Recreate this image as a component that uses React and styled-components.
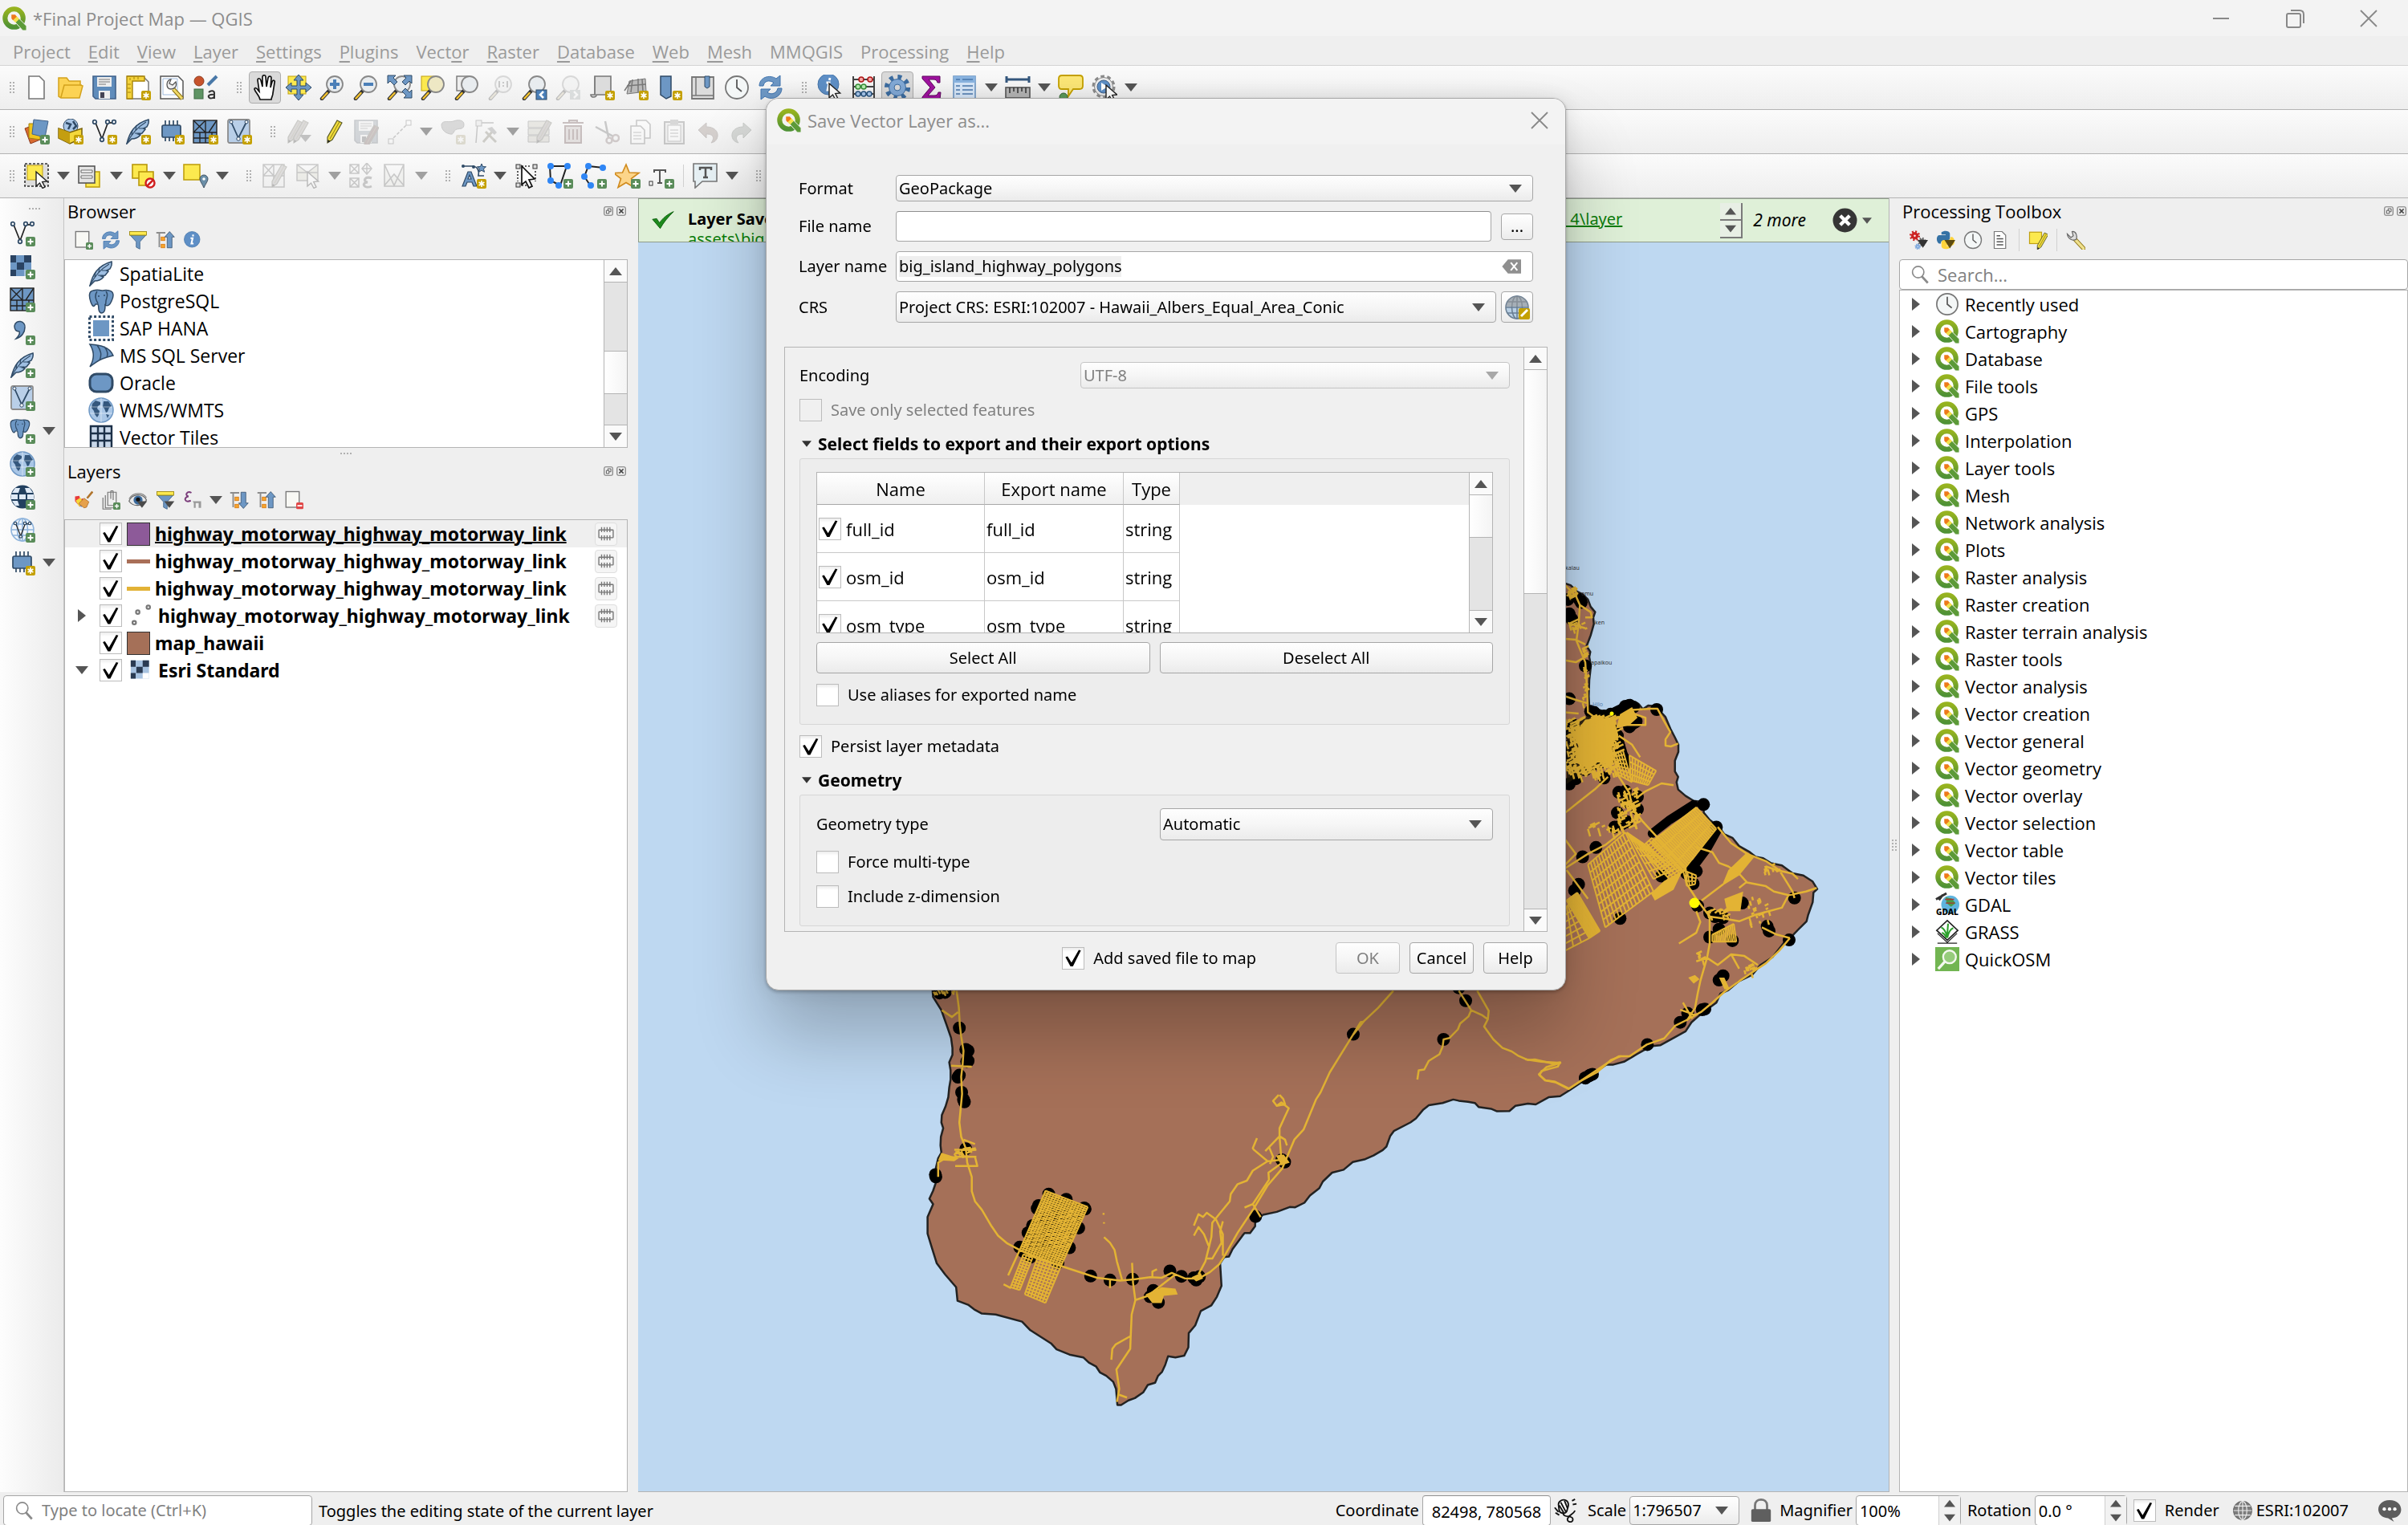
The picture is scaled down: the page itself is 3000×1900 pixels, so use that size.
import React from "react";
import styled, { createGlobalStyle, css } from "styled-components";

const ui = `"Open Sans", "Noto Sans", sans-serif`;
const form = `"Noto Sans", "Open Sans", sans-serif`;
const edge = "#b4b4b4";

const Global = createGlobalStyle`
  * { box-sizing: border-box; }
  body { margin: 0; background: #efefef; color: #000; font: 22px/28px ${ui}; }
  button, input, select { font: inherit; color: inherit; margin: 0; }
  button { padding: 0; border: 0; background: none; }
  ul { margin: 0; padding: 0; list-style: none; }
  svg { display: block; }
`;

/* ---------- icon artwork, drawn on a 32 unit grid ---------- */

const B = "#6d97c4";
const D = "#2f4a66";
const G = "#8c8c8c";

const Plus = () => (
  <g><rect x="20" y="20" width="12" height="12" rx="2" fill="#5a8c5a" /><path d="M26 22.5v7M22.5 26h7" stroke="#fff" strokeWidth="2" /></g>
);
const Star = () => (
  <g><rect x="20" y="20" width="12" height="12" rx="2" fill="#c4a000" /><path d="M26 22v8M22.6 24l6.800 4M29.400 24l-6.800 4" stroke="#fff" strokeWidth="1.600" /></g>
);
const Lens = ({ tint = "#e8ecef" }) => (
  <g>
    <path d="M12 20L3 30" stroke="#333" strokeWidth="4.500" strokeLinecap="round" />
    <path d="M9.500 23L3.500 29.500" stroke="#f3c330" strokeWidth="2.500" strokeLinecap="round" />
    <circle cx="19" cy="12" r="10" fill={tint} stroke="#888" strokeWidth="1.800" />
  </g>
);
const Pencil = ({ fill = "#f0dc3c" }) => (
  <g><path d="M22 2l6 3-12 21-6 4 0-7z" fill={fill} stroke="#5b5b2a" strokeWidth="1.200" /><path d="M25 3.500L13 25" stroke="#8c7c10" strokeWidth="1" /><path d="M10 30l.5-4 3 1.800z" fill="#222" /></g>
);
const Cursor = () => <path d="M15 11v18l4.500-4 3.500 6.500 3-1.500-3.300-6.500 6-.5z" fill="#fff" stroke="#222" strokeWidth="1.400" />;
const Meridians = ({ c = D, fill = B }) => (
  <g fill="none" stroke={c} strokeWidth="1.600"><circle cx="16" cy="16" r="14" fill={fill} /><ellipse cx="16" cy="16" rx="6.500" ry="14" /><path d="M16 2v28M2 16h28M4 9h24M4 23h24" /></g>
);
const Land = () => (
  <g><circle cx="16" cy="16" r="15" fill="#a9c6e6" stroke={B} strokeWidth="1.500" />
    <path d="M5 8l4-4 6 2 0 3-3 2-1 3 3 3-1 5-2 3-3-4-1-4-3-4zM19 5l6 0 4 6-3 2-2 5-2 1-2-5-2-2zM22 21l4 1-2 4z" fill="#34577d" />
    <path d="M2 12h28M2 20h28M16 1v30" stroke="#fff" strokeWidth=".7" opacity=".7" /></g>
);
const Gear = ({ cx = 16, cy = 16, r = 9, fill = "#82a9d6", stroke = "#3c6ca0", hole = "#dcdcdc" }) => (
  <g>
    <circle cx={cx} cy={cy} r={r * 1.15} fill="none" stroke={stroke} strokeWidth={r * 0.62} strokeDasharray={`${r * 0.42} ${r * 0.483}`} />
    <circle cx={cx} cy={cy} r={r * 0.95} fill={fill} stroke={stroke} strokeWidth="1" />
    <circle cx={cx} cy={cy} r={r * 0.36} fill={hole} stroke={stroke} strokeWidth="1" />
  </g>
);
const Feather = () => (
  <g><path d="M2 31C5 18 11 6 29 1c1 5-1 7-2 9l-4 2 2 1-4 5-5 1 3 1c-4 5-8 5-11 5z" fill="#9fbfe2" stroke={D} strokeWidth="1.500" /><path d="M2 31C8 18 16 10 26 4M8 20l1-6M13 14l1-6M12 18h6M17 12h7" stroke={D} strokeWidth="1.200" fill="none" /></g>
);
const Elephant = () => (
  <g fill={B} stroke={D} strokeWidth="1.500"><path d="M6 3c-6 1-5 8-3 14 2 6 4 7 6 3l3 0c2 4-1 9 4 11 5 0 5-5 5-10 3 2 6 0 8-5 3-6 3-12-3-13-5-1-6 0-9 0-4-1-8-1-11 0z" /><path d="M11 4c-3 4-2 10 1 15M22 4c4 5 0 9 0 12 0 2 0 4-1 5" fill="none" /><path d="M13 10h0M20 9h0" strokeWidth="2" strokeLinecap="round" /></g>
);
const Chip = ({ fill = B, stroke = D }) => (
  <g stroke={stroke} strokeWidth="1.700"><path d="M8 2v6M13 2v6M18 2v6M23 2v6M8 22v6M13 22v6M18 22v6" /><rect x="4" y="8" width="23" height="15" rx="2" fill={fill} /></g>
);
const Vee = () => (
  <g fill="none" stroke={D} strokeWidth="1.700"><path d="M5 5l8 20 7-19" stroke="#222" /><path d="M20 5h7" stroke="#222" /><circle cx="4" cy="4" r="2.300" fill="#fff" /><circle cx="20" cy="4" r="2.300" fill="#fff" /><circle cx="28" cy="4" r="2.300" fill="#fff" /><circle cx="13" cy="26" r="2.300" fill="#fff" /></g>
);
const MeshArt = () => (
  <g stroke="#222" strokeWidth="1.400" fill={B}><rect x="1" y="2" width="29" height="28" /><path d="M1 17h29M1 2l15 15M16 2L1 17M16 2v28M30 2L20 17M1 24h29M9 17v13M24 17v13" fill="none" /></g>
);
const Checker = ({ a = "#2a4362", b = B, c = "#a7c2e0" }) => (
  <g><rect width="26" height="26" x="1" y="2" fill={b} /><path d="M1 2h7v9H1zM18 2h9v9h-9zM9 11h9v9H9zM1 20h7v8H1z" fill={a} /><path d="M18 20h9v8h-9z" fill={c} /></g>
);
const VeeTile = () => (
  <g><rect x="2" y="1" width="27" height="29" rx="2" fill="#b9cfe8" stroke={G} strokeWidth="1.800" /><path d="M6 4l9 20 10-20" fill="none" stroke={D} strokeWidth="1.800" /><circle cx="6" cy="4" r="2" fill="#fff" stroke={D} /><circle cx="25" cy="4" r="2" fill="#fff" stroke={D} /><circle cx="15" cy="25" r="2.200" fill="#fff" stroke={D} /></g>
);
const Page = () => <path d="M6 2h13l6 6v22H6z" fill="#fff" stroke="#777" strokeWidth="1.600" />;
const Clock = ({ r = 14 }) => (
  <g><circle cx="16" cy="16" r={r} fill="#f4f7f7" stroke="#777" strokeWidth="1.800" /><path d="M16 6v10l6 5" fill="none" stroke="#555" strokeWidth="1.800" /></g>
);
const Funnel = () => (
  <g><path d="M3 8h26l-10 11v12l-6-3V19z" fill={B} stroke="#44688f" strokeWidth="1.200" /><rect x="2" y="2" width="28" height="6" fill="#fce94f" stroke="#a08c10" strokeWidth="1.200" /></g>
);
const Down = () => <path d="M14 18h17l-8.500 11z" fill="#4a4a4a" />;
const TreeArt = () => (
  <g><path d="M1 4h15M6 4v24" stroke={G} strokeWidth="2.500" fill="none" /><rect x="9" y="11" width="6" height="6" fill="#f6a52c" stroke="#d2700a" /><rect x="9" y="23" width="6" height="6" fill="#f6a52c" stroke="#d2700a" /></g>
);
const Refresh = () => (
  <g fill={B} stroke="#3e72ad" strokeWidth="1"><path d="M2 14C2 4 14-1 23 5l5-4v13H16l4-4C14 6 8 8 7 14z" /><path d="M30 17c0 10-12 16-21 10l-5 4V18h12l-4 4c5 4 12 1 13-5z" /></g>
);
const Info = () => (
  <g><circle cx="15" cy="15" r="13" fill="#5e8fc6" stroke="#4675a8" /><path d="M17 7l-.6 3M12.500 13h3.500l-2 9h3.500" stroke="#fff" strokeWidth="2.800" fill="none" /></g>
);
const Disk = () => (
  <g><path d="M2 2h28v28H5l-3-3z" fill="#5f8cbb" stroke="#41628a" strokeWidth="1.600" /><rect x="7" y="3" width="18" height="12" fill="#eee" /><path d="M9 6h14M9 9h14M9 12h9" stroke="#777" /><rect x="9" y="20" width="14" height="10" fill="#eee" /><rect x="11" y="22" width="5" height="7" fill="#445" /></g>
);
const Squares = () => (
  <g fill="#fce94f" stroke="#b8980a" strokeWidth="1.600"><rect x="3" y="2" width="18" height="17" /><rect x="11" y="11" width="18" height="17" /></g>
);

const art = {
  logo: (
    <>
      <defs><linearGradient id="leaf" x2="0" y2="1"><stop stopColor="#97b31f" /><stop offset="1" stopColor="#4f9235" /></linearGradient></defs>
      <circle cx="15.500" cy="15.500" r="12" fill="none" stroke="url(#leaf)" strokeWidth="6.500" />
      <path d="M17 21l5-5 10 10v6h-5z" fill="#5c9a38" stroke="#f6f6f6" strokeWidth="1" />
      <path d="M13.500 17.500l5-5 4 4-5 5z" fill="#f2e04c" />
      <path d="M12 11h5l2 2.500-5 5-2-2.500z" fill="#ee7a1a" />
    </>
  ),
  page: <Page />,
  folder: <path d="M1 4h10l3 4h14v5l3 1-4 15H4L1 27zM4 28l4-15h22" fill="#fcd354" stroke="#d3a21c" strokeWidth="1.500" />,
  disk: <Disk />,
  layoutNew: <><path d="M3 2h19l7 7v21H3z" fill="#fff" stroke="#777" strokeWidth="1.500" /><path d="M2 2h22v6H9v22H2z" fill="#f4d33c" stroke="#a68308" strokeWidth="1.400" /><path d="M6 4v3M11 3v3M16 3v3M3 12h4M3 17h4M3 22h4" stroke="#a68308" /><Star /></>,
  layoutManage: <><path d="M2 2h22l6 6v22H2z" fill="#fff" stroke="#555" strokeWidth="1.500" /><path d="M5 5h18v20H5z" fill="none" stroke="#9db9dc" /><path d="M18 18l11 12" stroke="#876d0c" strokeWidth="5" /><path d="M18 18l11 12" stroke="#f0d968" strokeWidth="3" /><path d="M10 12c0-4 3-6 5-6l-2 5 4 2 4-4c2 6-2 9-6 9-3 0-5-2-5-6z" fill="#eee" stroke="#555" strokeWidth="1.300" /></>,
  styles: <><circle cx="8" cy="8" r="6" fill="#c7532c" stroke="#8d3a1d" /><path d="M30 2L19 13" stroke="#4978a8" strokeWidth="4" /><rect x="2" y="18" width="11" height="12" fill="#5f9464" stroke="#3f6b44" /><path d="M20 22c3-3 7-2 7 1v7M27 25c-5-1-8 1-7 3s6 2 7-1" fill="none" stroke="#333" strokeWidth="2" /></>,
  hand: <path d="M10 31c-1-5-6-9-7-13 0-2 3-2 5 2l1 1L7 7c0-3 3-3 4 0l2 8V3c0-3 4-3 4 0l1 12 2-11c1-3 4-2 4 0l-1 12 2-7c1-3 4-2 3 1l-2 13c0 4-2 5-2 8z" fill="#fff" stroke="#111" strokeWidth="1.700" />,
  pan: <><rect x="3" y="2" width="22" height="22" fill="#fce94f" stroke="#c0a010" /><path d="M16 0l6 7h-4v7h7v-4l7 6-7 6v-4h-7v7h4l-6 7-6-7h4v-7H7v4l-7-6 7-6v4h7V7h-4z" fill={B} stroke={D} strokeWidth="1" /></>,
  zoomIn: <><Lens /><path d="M19 6v12M13 12h12" stroke="#4a7fb8" strokeWidth="4" /></>,
  zoomOut: <><Lens /><path d="M13 12h12" stroke="#4a7fb8" strokeWidth="4" /></>,
  zoomFull: <><Lens /><path d="M1 1h10l-3 3 5 5-4 4-5-5-3 3zM31 1H21l3 3-5 5 4 4 5-5 3 3zM31 29H21l3-3-5-5 4-4 5 5 3-3z" fill={B} stroke={D} /></>,
  zoomSel: <><rect x="1" y="2" width="16" height="18" fill="#fce94f" stroke="#c0a010" /><Lens tint="#eee8c4" /></>,
  zoomLayer: <><rect x="3" y="2" width="14" height="18" fill="#eee" stroke="#777" strokeWidth="1.400" /><Lens /></>,
  zoomOne: <><Lens /><path d="M14 8v8M19 9v2M19 13v2M24 8v8" stroke="#555" strokeWidth="2" /></>,
  zoomLast: <><Lens /><rect x="18" y="19" width="13" height="12" fill="#4a7fb8" stroke={D} /><path d="M27 21l-4 4 4 4" stroke="#fff" strokeWidth="2.500" fill="none" /></>,
  zoomNext: <><Lens /><rect x="18" y="19" width="13" height="12" fill="#8aa" /><path d="M23 21l4 4-4 4" stroke="#fff" strokeWidth="2.500" fill="none" /></>,
  mapNew: <><path d="M7 2h20v23H9c0 4-7 4-7 0h5z" fill="#dcdcdc" stroke="#777" strokeWidth="1.600" /><path d="M7 2v23" stroke="#777" /><Star /></>,
  cube: <><path d="M8 8l20-3 1 16-24 3z" fill="#bbb" stroke="#777" /><path d="M2 20l8-12M12 6l-2 16M19 5v17M5 14l23-2M24 6l1 15" stroke="#777" fill="none" strokeWidth="1.500" /><Star /></>,
  markNew: <><path d="M5 2h13v25l-6 3-7-5z" fill={B} stroke={D} strokeWidth="1.500" /><Star /></>,
  mark: <><path d="M2 3h27v27H2z" fill="#dcdcdc" stroke="#777" strokeWidth="1.800" /><path d="M7 3v23M2 26h27" stroke="#777" strokeWidth="1.500" /><path d="M18 2h6v13l-3 2-3-2z" fill={B} stroke={D} /></>,
  clock: <Clock />,
  refresh: <Refresh />,
  identify: <><g transform="translate(-1 -3)"><Info /></g><Cursor /></>,
  abacus: <><path d="M3 2v30M29 2v30M3 6h26M3 15h26M3 24h26M1 31h30" stroke="#444" strokeWidth="2" /><g stroke="#b01818" fill="#f7a8a8" strokeWidth="1.500"><circle cx="13" cy="6" r="3" /><circle cx="24" cy="6" r="3" /></g><g stroke="#379037" fill="#b8ecb4" strokeWidth="1.500"><circle cx="9" cy="15" r="3" /><circle cx="16" cy="15" r="3" /></g><g stroke="#2a5580" fill="#a9c8ec" strokeWidth="1.500"><circle cx="9" cy="24" r="3" /><circle cx="16" cy="24" r="3" /><circle cx="23" cy="24" r="3" /></g></>,
  gear: <Gear r={11} />,
  sigma: <path d="M5 2h22v8h-3c-1-3-2-4-5-4h-6l8 10-9 10h8c3 0 4-1 5-4h3l-1 9H5v-3l10-12L5 5z" fill="#a012a0" stroke="#5c065c" />,
  table: <><rect x="2" y="2" width="27" height="29" fill="#d6e6f8" stroke="#6d97c4" strokeWidth="1.600" /><path d="M2 2h27v8H2z" fill="#8ab4e0" /><path d="M5 14h5M13 14h13M5 19h5M13 19h13M5 24h5M13 24h13M5 6h5M13 6h13" stroke="#4a78ac" strokeWidth="1.600" /></>,
  measure: <><path d="M2 6h28M2 2v8M30 2v8" stroke="#34577d" strokeWidth="3" /><rect x="1" y="16" width="30" height="13" fill="#b5b5b5" stroke="#555" strokeWidth="1.600" /><path d="M6 16v7M11 16v5M16 16v7M21 16v5M26 16v7" stroke="#333" strokeWidth="1.500" /></>,
  tip: <><path d="M5 1h22q4 0 4 4v9q0 4-4 4h-8l-6 9v-9H5q-4 0-4-4V5q0-4 4-4z" fill="#fbe676" stroke="#c4a000" strokeWidth="1.800" /><circle cx="7" cy="28" r="5" fill="#5a9a5a" stroke="#346434" /></>,
  action: <><circle cx="15" cy="15" r="12.500" fill="none" stroke="#8a8a8a" strokeWidth="4" strokeDasharray="4.500 3.350" /><circle cx="15" cy="15" r="11.500" fill="#ececec" stroke="#8a8a8a" /><circle cx="15" cy="15" r="8" fill="#5e8fc6" stroke="#41628a" /><path d="M12 10l8 5-8 5z" fill="#fff" /><g transform="translate(3 2)"><Cursor /></g></>,
  sources: <><path d="M1 12l11-4 8 18-12 5z" fill="#d86a30" stroke="#8d3a1d" /><path d="M6 6l14 0 0 20-14-2z" fill="#f0c41c" stroke="#a08010" /><path d="M12 1l18 2-4 20-16-4z" fill={B} stroke="#41628a" /><Plus /></>,
  geopackage: <><circle cx="16" cy="9" r="9" fill="#a9c6e6" stroke={D} /><path d="M10 5l6 2-3 6M19 3l4 6-4 4" stroke={D} strokeWidth="2.500" fill="none" /><path d="M1 12l14 5 15-5v12l-15 7-14-7z" fill="#f4d83c" stroke="#7a6208" strokeWidth="1.500" /><path d="M1 12l14 5v14L1 24z" fill="#c49e10" /><Star /></>,
  shape: <><Vee /><Star /></>,
  feather: <><Feather /><Star /></>,
  chipNew: <><Chip /><Star /></>,
  meshNew: <><MeshArt /><Star /></>,
  tileNew: <><VeeTile /><Star /></>,
  pencils: <><g transform="translate(-7 0)"><Pencil fill="#a98f88" /></g><Pencil fill="#a98f88" /><path d="M17 20h15l-7.500 9z" fill="#444" /></>,
  pencil: <Pencil />,
  diskEdit: <><Disk /><g transform="translate(4 6)"><Pencil fill="#a33" /></g></>,
  segment: <><path d="M4 28L27 5" stroke="#555" strokeWidth="1.500" strokeDasharray="4 2" /><rect x="2" y="25" width="6" height="6" fill="#fff" stroke="#555" /><rect x="24" y="2" width="6" height="6" fill="#fff" stroke="#555" /></>,
  polygon: <><path d="M2 7c2-6 10-2 15-4s13-2 13 4-4 5-9 6c-5 2-3 7-8 6S2 15 2 7z" fill="#8f8f8f" stroke="#555" /><Star /></>,
  vertex: <><path d="M5 5h20M5 5L3 30" stroke="#555" strokeWidth="1.500" /><rect x="3" y="2" width="7" height="7" fill="#ddd" stroke="#555" /><path d="M15 16l13 13M25 14L12 29" stroke="#7c6a2c" strokeWidth="3" /><path d="M17 12l6-2 6 7-3 3z" fill="#777" /></>,
  rows: <><path d="M2 3h26v8H2zM2 12h26v8H2zM2 21h26v8H2z" fill="#c9c28a" stroke="#555" /><g transform="translate(3 0)"><Pencil fill="#a88" /></g></>,
  trash: <path d="M3 5h26M11 5V2h10v3M6 9h20v21H6zM11 13v13M16 13v13M21 13v13" fill="#d9a8a0" stroke="#a02020" strokeWidth="2" />,
  cut: <><path d="M2 10l22 12M14 3l4 20" stroke="#555" strokeWidth="2.500" /><circle cx="27" cy="24" r="4" fill="none" stroke="#a55" strokeWidth="2.500" /><circle cx="19" cy="27" r="3.500" fill="none" stroke="#a55" strokeWidth="2.500" /></>,
  copy: <><path d="M11 2h12l5 5v17H11z" fill="#fff" stroke="#555" strokeWidth="1.600" /><path d="M4 9h12l5 5v17H4z" fill="#fff" stroke="#555" strokeWidth="1.600" /><path d="M7 17h10M7 21h10M7 25h10" stroke="#555" /></>,
  paste: <><rect x="4" y="4" width="24" height="27" fill="#ddd" stroke="#555" strokeWidth="2" /><rect x="8" y="8" width="16" height="20" fill="#fff" stroke="#555" /><rect x="11" y="1" width="10" height="6" fill="#888" /><path d="M11 14h10M11 18h10M11 22h10" stroke="#555" /></>,
  undo: <path d="M4 14L14 5v5c9 0 15 5 14 12-1 5-4 7-8 8 4-5 4-11-6-11v5z" fill="#b06848" stroke="#7a4a34" />,
  redo: <path d="M28 14L18 5v5C9 10 3 15 4 22c1 5 4 7 8 8-4-5-4-11 6-11v5z" fill="#7a947a" stroke="#4a6a4a" />,
  select: <><rect x="1" y="1" width="29" height="28" fill="#ddd" stroke="#333" strokeWidth="1.600" strokeDasharray="3 2" /><rect x="4" y="3" width="19" height="18" fill="#fce94f" stroke="#c0a010" /><Cursor /></>,
  selectForm: <><rect x="11" y="11" width="17" height="19" fill="#fce94f" stroke="#c0a010" strokeWidth="1.600" /><rect x="2" y="4" width="20" height="21" fill="#e4e4e4" stroke="#555" strokeWidth="1.600" /><path d="M5 9h14v3H5zM5 16h14v3H5z" fill="#fff" stroke="#666" /></>,
  deselect: <><Squares /><circle cx="25" cy="25" r="5.500" fill="#fff" stroke="#d02020" strokeWidth="2.500" /><path d="M21 29l8-8" stroke="#d02020" strokeWidth="2.500" /></>,
  selectPlace: <><rect x="1" y="2" width="20" height="19" fill="#fce94f" stroke="#c0a010" strokeWidth="1.600" /><path d="M26 31c-2-5-5-8-5-11a5 5 0 0110 0c0 3-3 6-5 11z" fill="#6b8fa8" stroke="#456" /><circle cx="26" cy="20" r="1.800" fill="#fff" /></>,
  meshEdit: <><path d="M2 2h26v28H2zM2 16h26M15 2v28M2 2l13 14M15 2L2 16" fill="#eee" stroke="#555" strokeWidth="1.500" /><g transform="translate(3 0)"><Pencil fill="#a99" /></g></>,
  meshSelect: <><path d="M2 2h26v20H2zM2 12h26M2 2l13 10L28 2" fill="#d8d89c" stroke="#555" strokeWidth="1.500" /><Cursor /></>,
  meshCalc: <><path d="M2 2h11v11H2zM2 2l11 11M13 2L2 13M23 0l6 7-6 7-6-7zM17 7h12M23 0v14M2 19h11v11H2zM2 19l11 11M13 19L2 30" fill="none" stroke="#555" strokeWidth="1.500" /><path d="M29 19c-8-3-12 4-5 5-9 1-4 9 5 5" stroke="#555" strokeWidth="3" fill="none" /></>,
  meshForce: <path d="M3 2h24v27H3zM3 2l12 26L27 2M3 28l12-14 12 14" fill="#e4e8d0" stroke="#555" strokeWidth="1.600" />,
  labels: <><path d="M2 29L9 11h4l7 18h-4l-2-5H8l-2 5zM9 20h4l-2-5z" fill={B} stroke={D} strokeWidth="1.200" /><path d="M2 4h14q8 2 6 12h7" stroke={D} strokeWidth="1.700" fill="none" /><circle cx="3" cy="4" r="2" fill={D} /><circle cx="16" cy="5" r="2" fill={D} /><path d="M26 1l1.500 3.500 4 .3-3 2.500 1 4-3.500-2-3.500 2 1-4-3-2.500 4-.3z" fill={B} stroke={D} /><Star /></>,
  annSelect: <><g fill="#ddd" stroke="#333"><rect x="3" y="2" width="5" height="5" /><rect x="24" y="2" width="5" height="5" /><rect x="3" y="25" width="5" height="5" /></g><path d="M10 4h12M5 10v13M27 10v13M10 28h12" stroke="#333" strokeDasharray="2 2" strokeWidth="1.600" /><path d="M10 4v23l5-4 4 8 4-2-4-8 7-1z" fill="#fff" stroke="#111" strokeWidth="1.700" /></>,
  annPoly: <><path d="M3 4h21l-8 24-12-6z" fill="none" stroke="#222" strokeWidth="2" /><g fill="#2f86f5"><circle cx="4" cy="4" r="4" /><circle cx="25" cy="4" r="4" /><circle cx="4" cy="22" r="4" /><circle cx="14" cy="28" r="4" /></g><Plus /></>,
  annLine: <><path d="M9 4l19 2M9 4L4 17l8 12" fill="none" stroke="#222" strokeWidth="2" /><g fill="#2f86f5"><circle cx="9" cy="4" r="4" /><circle cx="27" cy="6" r="4" /><circle cx="4" cy="17" r="4" /><circle cx="12" cy="28" r="4" /></g><Plus /></>,
  annStar: <><path d="M14 2l4 10 12 .5-9.500 7 3.500 11-10-6-10 6 3.500-11-9-7 11-.5z" fill="#fcd58a" stroke="#d08a1c" strokeWidth="1.600" /><Plus /></>,
  annText: <><path d="M7 12V9h14v3M14 9v16M11 25h6" fill="none" stroke="#555" strokeWidth="2" /><rect x="1" y="23" width="4" height="5" fill="#fff" stroke="#333" /><Plus /></>,
  bubbleText: <><path d="M1 1h29v22H12l-9 8V23H1z" fill="#e6f0f4" stroke="#777" strokeWidth="1.600" /><path d="M9 9V6h14v3M16 6v12M13 18h6" fill="none" stroke="#555" strokeWidth="2.500" /></>,
  vectorAdd: <><Vee /><Plus /></>,
  rasterAdd: <><Checker /><Plus /></>,
  meshAdd: <><MeshArt /><Plus /></>,
  comma: <><path d="M6 8a6.500 6.500 0 1113 2c0 6-4 12-11 14 4-4 5-7 4-9-4 0-6-3-6-7z" fill={B} stroke={D} strokeWidth="1.500" /><Plus /></>,
  featherAdd: <><Feather /><Plus /></>,
  tileAdd: <><VeeTile /><Plus /></>,
  pgAdd: <><g transform="scale(.8)"><Elephant /></g><Plus /></>,
  wmsAdd: <><Land /><Plus /></>,
  globeAdd: <><circle cx="16" cy="16" r="14.500" fill="#22405f" /><path d="M7 5h6l-2 6H3zM19 5h6l4 6h-8zM2 13h8v6H2zM12 13h8v6h-8zM22 13h8v6h-8zM3 21h7l2 6H7zM22 21h7l-4 6h-5z" fill="#dfeaf6" /><Plus /></>,
  wfsAdd: <><Meridians c="#8fb4dc" fill="#f2f6fb" /><g transform="translate(4 5) scale(.75)"><Vee /></g><Plus /></>,
  featherOnly: <Feather />,
  pg: <Elephant />,
  hana: <><rect x="6" y="6" width="20" height="20" fill={B} /><rect x="1.500" y="1.500" width="29" height="29" fill="none" stroke={D} strokeWidth="3" strokeDasharray="3 2.600" /></>,
  mssql: <path d="M2 2c11 1 24 2 29 14C22 18 14 20 2 30 8 20 7 10 2 2zM11 3c5 7 6 12 3 19M20 5c4 5 5 9 3 13" fill={B} stroke={D} strokeWidth="1.500" />,
  oracle: <rect x="2" y="5" width="28" height="22" rx="8" fill={B} stroke={D} strokeWidth="3" />,
  wms: <Land />,
  vtiles: <path d="M3 2h26v28H3zM3 11h26M3 20h26M12 2v28M20 2v28" fill="#c9d8ea" stroke="#1c3048" strokeWidth="2.400" />,
  addSel: <><rect x="3" y="2" width="22" height="26" fill="#f8f8f4" stroke="#777" strokeWidth="1.800" /><Plus /></>,
  funnel: <Funnel />,
  funnelDown: <><Funnel /><Down /></>,
  collapse: <><TreeArt /><path d="M23 2l8 9h-4v18h-8V11h-4z" fill={B} stroke={D} /></>,
  expand: <><TreeArt /><path d="M23 30l8-9h-4V3h-8v18h-4z" fill={B} stroke={D} /></>,
  info: <Info />,
  brush: <><path d="M2 10l7-1 2 6 4-2 2 8-7 6-8-9z" fill="#e83a3a" /><path d="M3 17l8-5 4 8-6 7z" fill="#f5d83a" /><path d="M9 22l5-3 3 5-5 4z" fill="#5c96d8" /><path d="M31 2L22 13" stroke="#b0742c" strokeWidth="3.500" /><path d="M17 13l8 6-4 9-4 1-9-7z" fill="#e6a14c" stroke="#a8641c" /></>,
  groupAdd: <><path d="M11 3h14v22H11z" fill="#eee" stroke="#777" strokeWidth="1.600" /><path d="M7 8v21h14M3 12v19h14M16 14V2c0-2 4-2 4 0v14" fill="none" stroke="#777" strokeWidth="1.600" /><Plus /></>,
  eye: <><path d="M1 18C6 5 24 4 30 16 24 27 8 28 1 18z" fill="#e8e8e8" stroke="#666" strokeWidth="1.600" /><circle cx="16" cy="16" r="7.500" fill="#3a6a9c" /><circle cx="16" cy="15" r="3.500" fill="#111" /><path d="M1 14C8 2 24 3 30 12" fill="none" stroke="#888" strokeWidth="1.600" /><Down /></>,
  epsilon: <><path d="M14 4C7 0 2 8 9 10c-9 2-6 11 4 7" fill="none" stroke="#7b3d7b" strokeWidth="2.600" /><path d="M16 18h14v11h-4v-8h-5v8h-3v-8z" fill="#999" /></>,
  removeLayer: <><rect x="3" y="2" width="22" height="26" fill="#f8f8f4" stroke="#777" strokeWidth="1.800" /><rect x="20" y="20" width="12" height="11" rx="2" fill="#e04848" /><path d="M22 25.500h8" stroke="#fff" strokeWidth="2.400" /></>,
  memory: <g stroke="#777" strokeWidth="2" fill="none"><rect x="3" y="9" width="26" height="14" rx="1" /><path d="M8 4v9M13 4v9M18 4v9M23 4v9M8 19v9M13 19v9M18 19v9M23 19v9" /></g>,
  points: <g fill="#fff" stroke="#777" strokeWidth="2.500"><circle cx="6" cy="26" r="2.500" /><circle cx="11" cy="11" r="2.500" /><circle cx="26" cy="4" r="2.500" /></g>,
  checker: <Checker a="#2a3a52" b="#a7c2e0" c="#fff" />,
  models: <><Gear cx={10} cy={9} r={6} fill="#c22" stroke="#c22" hole="#fff" /><Gear cx={22} cy={19} r={5} fill="#666" stroke="#666" hole="#ddd" /><Gear cx={15} cy={27} r={3.5} fill="#7fa8dc" stroke="#7fa8dc" hole="#fff" /><path d="M15 16h17l-8.500 13z" fill="#333" /></>,
  python: <><path d="M9 3c4-3 13-3 14 2v8c0 3-2 4-5 4h-6c-3 0-4 2-4 5H5c-5-3-5-13 0-14h11V7H9z" fill="#3572a5" /><path d="M23 29c-4 3-13 3-14-2v-7c0-3 2-4 5-4h6c3 0 4-2 4-5h3c5 3 5 13 0 14H17v1h6z" fill="#ffd43b" /><path d="M14 16h18l-9 14z" fill="#5c4a10" /></>,
  document: <><Page /><path d="M10 9h6M10 14h11M10 19h11M10 24h11" stroke="#555" strokeWidth="2" /></>,
  noteEdit: <><rect x="2" y="3" width="20" height="19" fill="#fce94f" stroke="#c0a010" strokeWidth="1.600" /><g transform="translate(5 2)"><Pencil /></g></>,
  wrench: <><path d="M14 14l15 16" stroke="#876d0c" strokeWidth="7" strokeLinecap="round" /><path d="M14 14l15 16" stroke="#efe08c" strokeWidth="4.500" strokeLinecap="round" /><path d="M2 6l6 6 4-3-2-7c7-1 9 8 7 13-5 3-14 0-15-9z" fill="#ddd" stroke="#666" strokeWidth="1.600" /></>,
  gdal: <><circle cx="20" cy="16" r="12" fill="#5fb4de" /><path d="M14 6l8 2 5 6-6 5-6-5z" fill="#4a9a4a" /><path d="M13 9h12M14 14h12" stroke="#a33" strokeWidth="1.500" /><path d="M1 9l14-8M5 10l5-7" stroke="#333" strokeWidth="3" /><text x="1" y="30" fontFamily="Noto Sans, sans-serif" fontWeight="800" fontSize="11">GDAL</text></>,
  grass: <><path d="M16 1l14 13-14 13L2 14z" fill="#fff" stroke="#222" strokeWidth="1.800" /><path d="M3 18l13 12 13-12M3 31h26" fill="none" stroke="#222" strokeWidth="1.400" /><path d="M16 24C15 15 10 11 8 10M16 24c0-10 1-14 1-19M16 24c2-9 5-12 8-13M15 24c-2-5-4-6-6-7" stroke="#2ca02c" strokeWidth="2.200" fill="none" /></>,
  osm: <><rect width="32" height="32" fill="#72b552" /><circle cx="19" cy="13" r="8.500" fill="#96cc7c" stroke="#f4f8f0" strokeWidth="2.500" /><path d="M13 19L4 29" stroke="#f4f8f0" strokeWidth="3.500" /></>,
  search: <><circle cx="13" cy="12" r="9.500" fill="none" stroke="#8a8a8a" strokeWidth="2.200" /><path d="M19 19l10 11" stroke="#8a8a8a" strokeWidth="3.500" /></>,
  tick: <path d="M1 14l6-1 4 6C16 12 22 7 31 3 23 11 17 18 12 27z" fill="#1d8a1d" stroke="#0c5c0c" />,
  closeRound: <><circle cx="16" cy="16" r="15.500" fill="#353535" /><path d="M10 10l12 12M22 10L10 22" stroke="#fff" strokeWidth="4.500" /></>,
  crs: <><Meridians c="#6a7f94" fill="#b8cfe4" /><path d="M4 9C8 0 24 0 28 9l2 6H2z" fill="#9a9a9a" opacity=".6" /><rect x="18" y="17" width="14" height="14" rx="2" fill="#c4a000" /><path d="M21 27l8-8" stroke="#fff" strokeWidth="3" /></>,
  clear: <path d="M10 4h22v24H10L0 16zM15 10l10 12M25 10L15 22" fill="#8f8f8f" stroke="#fff" strokeWidth="2.500" />,
  mouse: <><path d="M9 3c5-3 11 0 10 7l-2 7c-2 4-9 3-10-1L6 8c0-2 1-4 3-5z" fill="#fff" stroke="#111" strokeWidth="2" /><path d="M9 5l7 13M14 3l4 10M7 9l6 10" stroke="#111" strokeWidth="2" /><path d="M1 12l5 6M2 19l5 3M24 3l4-2M25 8l5-1M12 19c1 8 12 2 13 8s-8 5-7 0 8-6 10-11" fill="none" stroke="#111" strokeWidth="2" /></>,
  lock: <><path d="M8 15V9c0-10 16-10 16 0v6" fill="none" stroke="#777" strokeWidth="3" /><rect x="3" y="14" width="26" height="17" rx="2" fill="#5f5f5f" /></>,
  globe: <g fill="none" stroke="#eee" strokeWidth="1.400"><circle cx="16" cy="16" r="14" fill="#7d7d7d" stroke="#666" /><ellipse cx="16" cy="16" rx="6.500" ry="14" /><path d="M16 2v28M2 16h28M4 9h24M4 23h24" /></g>,
  bubble: <><path d="M16 2c20 0 20 24 3 24l3 5-8-5C-4 25-3 2 16 2z" fill="#5c5c5c" /><g fill="#fff"><circle cx="9" cy="14" r="2.300" /><circle cx="16" cy="14" r="2.300" /><circle cx="23" cy="14" r="2.300" /></g></>,
  minimise: <path d="M6 16h20" stroke="#888" strokeWidth="2" />,
  restore: <path d="M6 12q0-2 2-2h13q2 0 2 2v13q0 2-2 2H8q-2 0-2-2zM11 6h11q5 0 5 5v11" fill="none" stroke="#888" strokeWidth="2" />,
  close: <path d="M6 6l20 20M26 6L6 26" stroke="#888" strokeWidth="1.800" />,
  float: <><rect x="2" y="2" width="28" height="28" rx="5" fill="none" stroke="#777" strokeWidth="3" /><path d="M9 14h9v10H9zM14 13V8h10v10h-5" fill="none" stroke="#555" strokeWidth="2.500" /></>,
  shut: <><rect x="2" y="2" width="28" height="28" rx="5" fill="none" stroke="#777" strokeWidth="3" /><path d="M9 9l14 14M23 9L9 23" stroke="#444" strokeWidth="4" /></>,
};

const Svg = styled.svg`
  flex: none;
  width: ${(p) => p.$size}px;
  height: ${(p) => p.$size}px;
  ${(p) => p.$faded && css`opacity: 0.28; filter: grayscale(0.75);`}
`;
const Icon = ({ name, size = 32, faded }) => (
  <Svg viewBox="0 0 32 32" $size={size} $faded={faded} aria-hidden="true">{art[name]}</Svg>
);

const CaretSvg = styled.svg`
  flex: none;
  width: ${(p) => p.$w}px;
  height: ${(p) => p.$w}px;
  transform: rotate(${(p) => p.$turn}deg);
  fill: ${(p) => p.$color};
  pointer-events: none;
`;
const Caret = ({ w = 16, turn = 0, color = "#555" }) => (
  <CaretSvg viewBox="0 0 16 16" $w={w} $turn={turn} $color={color} aria-hidden="true"><path d="M0 3h16L8 13z" /></CaretSvg>
);

/* ---------- shared controls ---------- */

const raised = "linear-gradient(#fefefe, #f6f6f6 50%, #ebebeb)";

const Push = styled.button`
  flex: ${(p) => (p.$grow ? 1 : "none")};
  min-width: ${(p) => p.$min || 40}px;
  height: ${(p) => p.$h || 39}px;
  display: flex;
  align-items: center;
  justify-content: center;
  font: 20px/26px ${form};
  background: ${raised};
  border: 1px solid #a6a6a6;
  border-radius: 4px;
  &:disabled { color: #808080; border-color: #c4c4c4; }
`;

const SelectBox = styled.span`
  flex: 1;
  display: grid;
  align-items: center;
  & > * { grid-area: 1 / 1; }
  & > svg { justify-self: end; margin-right: 14px; }
`;
const RawSelect = styled.select`
  appearance: none;
  width: 100%;
  height: ${(p) => p.$h}px;
  padding: 0 36px 0 3px;
  font: 20px/26px ${form};
  background: ${raised};
  border: 1px solid #a6a6a6;
  border-radius: 4px;
  &:disabled { color: #808080; border-color: #c4c4c4; opacity: 1; }
`;
const Select = ({ id, value, h, disabled }) => (
  <SelectBox>
    <RawSelect id={id} $h={h} disabled={disabled} defaultValue={value} aria-label={id ? undefined : value}><option>{value}</option></RawSelect>
    <Caret color={disabled ? "#a8a8a8" : "#555"} />
  </SelectBox>
);

const Field = styled.input`
  flex: 1;
  width: 100%;
  min-width: 0;
  height: 38px;
  padding: 2px 3px 0;
  font: 20px/26px ${form};
  background: #fff;
  border: 1px solid #a6a6a6;
  border-top-color: #8f8f8f;
  border-radius: 4px;
`;

const Tick = styled.input.attrs({ type: "checkbox" })`
  appearance: none;
  flex: none;
  width: 28px;
  height: 28px;
  background: linear-gradient(#ececec, #fff 5px);
  border: 1px solid #bcbcbc;
  &:disabled { background: #f0f0f0; }
  &:checked::before {
    content: "";
    display: block;
    width: 26px;
    height: 26px;
    background: #000;
    clip-path: polygon(12% 46%, 22% 42%, 41% 72%, 76% 12%, 86% 14%, 48% 90%, 36% 90%);
  }
`;
const TickLabel = styled.label`
  display: flex;
  align-items: center;
  gap: 11px;
  height: 28px;
  font: 20px/30px ${form};
  color: ${(p) => (p.$off ? "#808080" : "#000")};
`;

const Bar = styled.div`
  flex: none;
  width: 29px;
  display: flex;
  flex-direction: column;
  background: #e4e4e4;
  border-left: 1px solid ${edge};
`;
const BarEnd = styled.button`
  height: 28px;
  display: flex;
  align-items: center;
  justify-content: center;
  background: #fafafa;
  border: solid ${edge};
  border-width: ${(p) => (p.$low ? "1px 0 0" : "0 0 1px")};
`;
const BarGap = styled.div`flex: ${(p) => p.$n} 0 0;`;
const BarThumb = styled.div`
  flex: ${(p) => p.$n} 0 0;
  background: linear-gradient(90deg, #fff, #f4f4f4);
  border: solid ${edge};
  border-width: ${(p) => (p.$first ? "0 0 1px" : "1px 0")};
`;
const ScrollBar = ({ before, thumb, after }) => (
  <Bar>
    <BarEnd aria-label="Scroll up"><Caret turn={180} /></BarEnd>
    <BarGap $n={before} /><BarThumb $n={thumb} $first={!before} /><BarGap $n={after} />
    <BarEnd $low aria-label="Scroll down"><Caret /></BarEnd>
  </Bar>
);

const Dots = styled.span`
  flex: none;
  width: ${(p) => (p.$across ? 16 : 8)}px;
  height: ${(p) => (p.$across ? 4 : 16)}px;
  background: radial-gradient(circle at 2px 2px, #b0b0b0 1px, transparent 1px) 0 0 / 4px 4px;
`;

/* ---------- window frame ---------- */

const Window = styled.div`
  height: 100vh;
  display: flex;
  flex-direction: column;
  overflow: hidden;
`;
const TitleBar = styled.header`
  flex: none;
  height: ${(p) => p.$h}px;
  display: flex;
  align-items: center;
  gap: 8px;
  padding: ${(p) => p.$pad};
  background: #f3f3f3;
  color: #8c8c8c;
`;
const WindowTitle = styled.h1`
  flex: 1;
  margin: 0;
  font: 22px/28px ${ui};
`;
const FrameButtons = styled.div`
  display: flex;
  gap: 60px;
  padding-right: 30px;
`;
const MenuBar = styled.nav`
  flex: none;
  height: 37px;
  display: flex;
  align-items: center;
  gap: 22px;
  padding: 2px 16px 0;
  border-bottom: 1px solid #d4d4d4;
  color: #9a9a9a;
  u { text-underline-offset: 3px; text-decoration-thickness: 2px; }
`;
const ToolRow = styled.div`
  flex: none;
  height: 55px;
  display: flex;
  align-items: center;
  padding-left: 1px;
  background: linear-gradient(#fbfbfb, #eeeeee);
  border-bottom: 1px solid ${edge};
`;
const Grip = styled.span`
  flex: none;
  display: flex;
  justify-content: flex-end;
  width: ${(p) => (p.$first ? 24 : 32)}px;
  padding-right: ${(p) => (p.$first ? 6 : 7)}px;
`;
const Tool = styled.button`
  flex: none;
  width: 40px;
  height: 40px;
  margin: 0 1px;
  display: flex;
  align-items: center;
  justify-content: center;
  border: 1px solid ${(p) => (p.$on ? "#adadad" : "transparent")};
  border-radius: 4px;
  background: ${(p) => (p.$on ? "#dadada" : "none")};
`;
const Drop = styled.button`
  flex: none;
  width: 24px;
  height: 40px;
  display: flex;
  align-items: center;
  justify-content: center;
`;
const Rule = styled.span`
  flex: none;
  width: 1px;
  height: 28px;
  margin: 0 6px;
  background: #d0d0d0;
`;

/* "|" grip, ":" rule, "v" drop-down; "-" fades and "*" presses the named tool */
const rows = [
  "| page folder disk layoutNew layoutManage styles | *hand pan zoomIn zoomOut zoomFull zoomSel zoomLayer -zoomOne zoomLast -zoomNext mapNew cube markNew mark clock refresh | identify abacus *gear sigma table v measure v tip action v",
  "| sources geopackage shape feather chipNew meshNew tileNew | -pencils pencil -diskEdit -segment -v -polygon -vertex -v -rows -trash -cut -copy -paste -undo -redo",
  "| select v selectForm v deselect v selectPlace v | -meshEdit -meshSelect -v -meshCalc -meshForce -v | labels v annSelect annPoly annLine annStar annText : bubbleText v |",
];
const ToolBar = ({ spec }) => (
  <ToolRow role="toolbar">
    {spec.split(" ").map((word, i) => {
      const faded = word[0] === "-";
      const on = word[0] === "*";
      const name = faded || on ? word.slice(1) : word;
      if (name === "|") return <Grip key={i} $first={i === 0}><Dots /></Grip>;
      if (name === ":") return <Rule key={i} />;
      if (name === "v") return <Drop key={i} aria-label="More" disabled={faded}><Caret color={faded ? "#a0a0a0" : "#555"} /></Drop>;
      return <Tool key={i} aria-label={name} $on={on} disabled={faded}><Icon name={name} faded={faded} /></Tool>;
    })}
  </ToolRow>
);

const Main = styled.main`
  flex: 1;
  min-height: 0;
  display: flex;
`;
const SideTools = styled.div`
  flex: none;
  width: 80px;
  padding: 11px 0 0 7px;
  background: linear-gradient(90deg, #fdfdfd, #ebebeb);
  border-right: 1px solid #c4c4c4;
`;
const SideGrip = styled.div`
  display: flex;
  justify-content: center;
  height: 12px;
`;
const SideRow = styled.div`
  display: flex;
  align-items: center;
  height: 41px;
`;
const sideTools = ["vectorAdd", "rasterAdd", "meshAdd", "comma", "featherAdd", "tileAdd", "pgAdd v", "wmsAdd", "globeAdd", "wfsAdd", "chipNew v"];

/* ---------- docks ---------- */

const Dock = styled.section`
  flex: none;
  width: ${(p) => p.$w}px;
  display: flex;
  flex-direction: column;
`;
const DockHead = styled.div`
  flex: none;
  height: 34px;
  display: flex;
  align-items: center;
  gap: 4px;
  padding: 0 2px 3px 4px;
`;
const DockTitle = styled.h2`
  flex: 1;
  margin: 0;
  font: 22px/28px ${ui};
`;
const DockTools = styled.div`
  flex: none;
  height: 36px;
  display: flex;
  align-items: center;
  margin-bottom: 6px;
  padding-left: 7px;
`;
const SmallTool = styled.button`
  width: 34px;
  height: 34px;
  display: flex;
  align-items: center;
  justify-content: center;
`;
const Well = styled.div`
  flex: ${(p) => (p.$h ? "none" : 1)};
  height: ${(p) => (p.$h ? `${p.$h}px` : "auto")};
  min-height: 0;
  display: flex;
  overflow: hidden;
  background: #fff;
  border: 1px solid ${edge};
`;
const List = styled.ul`
  flex: 1;
  min-width: 0;
  font-size: ${(p) => p.$font || 22}px;
`;
const Row = styled.li`
  height: 34px;
  display: flex;
  align-items: center;
  gap: ${(p) => p.$gap}px;
  padding: 0 12px 0 ${(p) => p.$pad}px;
  background: ${(p) => (p.$current ? "#efefef" : "none")};
  white-space: nowrap;
`;
const Splitter = styled.div`
  flex: none;
  height: 13px;
  display: flex;
  align-items: center;
  justify-content: center;
`;
const HeadButtons = () => (
  <>
    <button aria-label="Float"><Icon name="float" size={12} /></button>
    <button aria-label="Close"><Icon name="shut" size={12} /></button>
  </>
);

const sources = [
  ["featherOnly", "SpatiaLite"], ["pg", "PostgreSQL"], ["hana", "SAP HANA"], ["mssql", "MS SQL Server"],
  ["oracle", "Oracle"], ["wms", "WMS/WMTS"], ["vtiles", "Vector Tiles"],
];

const Fold = styled.span`
  flex: none;
  width: 16px;
  display: flex;
  margin-right: ${(p) => p.$after}px;
`;
const Swatch = styled.span`
  flex: none;
  width: 29px;
  height: ${(p) => (p.$line ? 5 : 29)}px;
  background: ${(p) => p.$color};
  border: ${(p) => (p.$line ? "0" : "1px solid #333")};
`;
const LayerIcon = styled.span`
  flex: none;
  width: 33px;
  padding-left: 4px;
`;
const LayerName = styled.label`
  flex: 1;
  font: bold 23px/28px ${form};
  text-decoration: ${(p) => (p.$current ? "underline" : "none")};
  text-decoration-thickness: 2px;
`;
const MemoryButton = styled.button`
  width: 28px;
  height: 29px;
  display: flex;
  align-items: center;
  justify-content: center;
  background: #f5f5f5;
  border: 1px solid #dedede;
  border-radius: 4px;
`;
const link = "highway_motorway_highway_motorway_link";
const layers = [
  { name: link, color: "#8d5a99", temp: true, current: true },
  { name: link, color: "#a96f58", line: true, temp: true },
  { name: link, color: "#e2b236", line: true, temp: true },
  { name: link, icon: "points", temp: true, fold: -90 },
  { name: "map_hawaii", color: "#a57058" },
  { name: "Esri Standard", icon: "checker", fold: 0 },
];

const SearchRow = styled.label`
  flex: none;
  height: ${(p) => p.$h}px;
  width: ${(p) => (p.$w ? `${p.$w}px` : "auto")};
  display: flex;
  align-items: center;
  gap: 10px;
  padding: 0 13px;
  background: #fff;
  border: 1px solid #a6a6a6;
  border-radius: 4px;
`;
const SearchInput = styled.input`
  flex: 1;
  min-width: 0;
  padding: 0;
  border: 0;
  background: none;
  font: ${(p) => (p.$form ? `20px/26px ${form}` : `22px/28px ${ui}`)};
  &::placeholder { color: #808080; opacity: 1; }
`;
const toolbox = [
  ["clock", "Recently used"],
  ...["Cartography", "Database", "File tools", "GPS", "Interpolation", "Layer tools", "Mesh", "Network analysis", "Plots",
    "Raster analysis", "Raster creation", "Raster terrain analysis", "Raster tools", "Vector analysis", "Vector creation",
    "Vector general", "Vector geometry", "Vector overlay", "Vector selection", "Vector table", "Vector tiles"].map((t) => ["logo", t]),
  ["gdal", "GDAL"], ["grass", "GRASS"], ["osm", "QuickOSM"],
];
const RightGrip = styled.div`
  flex: none;
  width: 12px;
  display: flex;
  align-items: center;
  justify-content: center;
`;

/* ---------- map canvas ---------- */

const Canvas = styled.section`
  flex: 1;
  min-width: 0;
  margin-left: 13px;
  display: flex;
  flex-direction: column;
  border: solid ${edge};
  border-width: 0 1px 1px 0;
  background: #bed8f1;
`;
const MapSvg = styled.svg`
  flex: 1;
  min-height: 0;
  width: 100%;
`;
const Message = styled.div`
  flex: none;
  height: 55px;
  display: flex;
  align-items: center;
  overflow: hidden;
  padding: 0 21px 0 16px;
  background: #dff0d8;
  border: 1px solid #8f9c8b;
  border-right: 0;
  font: 20px/25px ${form};
`;
const MessageText = styled.div`
  flex: 1;
  align-self: flex-start;
  margin: 12px 122px 0 17px;
  a { color: #0b7d0b; white-space: pre; }
`;
const MessageLine = styled.div`
  display: flex;
  justify-content: space-between;
`;
const Stepper = styled.span`
  flex: none;
  display: flex;
  flex-direction: column;
  width: ${(p) => p.$w}px;
`;
const Step = styled.button`
  height: ${(p) => (p.$boxed ? 22 : 18)}px;
  display: flex;
  align-items: center;
  justify-content: center;
  background: ${(p) => (p.$boxed ? "#e8efe5" : "none")};
  border: solid #7a7a7a;
  border-width: ${(p) => (p.$boxed ? "0 2px 2px 0" : 0)};
`;
const Count = styled.em`
  margin: 0 33px 0 13px;
  font-size: 21px;
`;
const CloseGroup = styled.span`
  display: flex;
  align-items: center;
  gap: 6px;
`;

const south = ([x, y]) => [1120 + x * 0.574, 1220 + y * 0.357];
const east = ([x, y]) => [1900 + x / 3, 680 + y * 0.4464];
const pairs = (text) => text.trim().split(/\s+/).map((p) => p.split(",").map(Number));
const spot = ([x, y]) => `${x.toFixed(1)} ${y.toFixed(1)}`;
const trace = (place, text) => text.split("/").map((run) => `M${pairs(run).map(place).map(spot).join("L")}`).join("");
const mix = (a, b, t) => [a[0] + (b[0] - a[0]) * t, a[1] + (b[1] - a[1]) * t];
const grid = (place, text, n, m) => {
  const [a, b, c, d] = pairs(text).map(place);
  let path = "";
  for (let i = 0; i <= n; i++) path += `M${spot(mix(a, b, i / n))}L${spot(mix(d, c, i / n))}`;
  for (let i = 0; i <= m; i++) path += `M${spot(mix(a, d, i / m))}L${spot(mix(b, c, i / m))}`;
  return path;
};
const scatter = (place, x, y, w, h, count, seed, reach = 26) => {
  let s = seed;
  const next = () => ((s = (s * 16807) % 2147483647) / 2147483647);
  let path = "";
  for (let i = 0; i < count; i++) {
    const px = x + next() * w;
    const py = y + next() * h;
    const flat = next() > 0.5;
    const len = 8 + next() * reach;
    path += `M${spot(place([px, py]))}L${spot(place([px + (flat ? len : len * 0.3), py + (flat ? -len * 0.35 : len * 0.8)]))}`;
  }
  return path;
};

const coastSouth = `73,40 74,62 92,108 103,158 113,205 116,240 116,264 109,290 112,318 112,350 109,378 107,412 101,444 93,474 92,500 96,520 91,550 90,580 92,605 85,625 80,660 80,710 74,738 66,766 74,785 62,830 62,888 72,940 82,992 100,1030 124,1075 127,1122 150,1136 163,1152 180,1167 210,1170 267,1195 285,1225 330,1271 342,1292 370,1310 400,1320 412,1338 428,1352 436,1372 450,1384 465,1405 471,1430 474,1486 482,1486 498,1470 512,1462 530,1442 540,1416 556,1408 562,1385 571,1370 578,1345 584,1316 600,1320 619,1314 628,1285 629,1235 643,1208 655,1158 678,1138 690,1108 700,1070 698,1020 697,992 706,970 716,968 724,942 745,896 750,886 762,886 773,862 773,850 790,822 820,812 848,795 860,796 880,780 892,755 912,730 920,706 940,675 965,665 985,638 1012,628 1030,615 1050,596 1058,584 1066,548 1074,530 1110,500 1122,486 1138,455 1150,440 1180,432 1203,420 1215,424 1235,428 1250,432 1258,446 1285,452 1298,461 1325,460 1338,442 1365,434 1382,437 1410,412 1435,408 1455,388 1490,350 1535,298`;
const coastEast = `330,1448 370,1440 420,1418 470,1397 505,1394 550,1376 600,1355 622,1330 660,1305 715,1275 730,1250 760,1240 800,1215 850,1197 880,1170 925,1148 965,1110 990,1095 1020,1072 1052,1048 1058,1030 1075,995 1078,968 1092,958 1075,937 1040,920 1000,914 960,892 920,886 890,872 862,868 840,855 800,838 775,815 745,805 725,785 690,765 668,745 665,715 630,712 600,698 572,680 566,660 572,645 560,630 560,600 573,575 573,555 560,535 543,510 525,478 505,462 490,448 460,446 440,456 425,442 395,430 370,436 345,455 300,470 260,460 240,448 238,420 240,375 246,335 240,310 244,296 230,280 245,250 257,218 255,200 262,185 245,170 235,150 215,135 195,128 170,110 150,105 0,60`;
const island = `M${[...pairs(coastSouth).map(south), ...pairs(coastEast).map(east), [1300, 700], [1165, 1200]].map(spot).join("L")}Z`;

const roadsSouth = `125,40 130,100 132,160 135,200 140,250 138,300 135,340 137,400 134,450 131,500 135,550 145,590 148,640 158,690 158,740 165,775 180,805 200,860 215,895 235,922 262,945 300,975 350,1000 430,1042 480,1052 510,1048 545,1040 570,1042 592,1025 620,1044 650,1045 675,1022 695,995 705,970 735,885 770,800 800,720 832,660 845,610 858,560 878,525 905,420 915,395 935,325 985,195 1010,145 1040,100 1073,40
/985,195 1002,150 1010,148/1215,40 1242,108 1236,130 1218,155 1213,175 1195,205 1182,210 1180,235 1173,262 1150,285 1140,315 1128,318 1125,350/1255,40 1280,110 1278,140 1265,125 1242,108
/1278,140 1270,165 1290,210 1310,240 1330,252 1345,268 1365,282 1380,280 1420,295 1435,290 1430,305 1395,320 1390,335 1403,353 1425,360 1453,383 1480,355 1515,325 1545,282 1568,268
/824,404 812,425 820,442 838,436 834,418 826,404/820,442 830,430 846,450 836,485 826,520 826,548 838,560 842,580/826,548 795,600/826,548 830,630 800,635 770,595 768,590 777,555/800,635 768,668 755,703 735,715 720,750 718,775 695,820 680,850 678,900 672,940 665,985 650,1030
/803,585 812,620 805,645/832,640 802,675 803,700 768,785 750,797/768,785 785,830/640,860 650,820 660,830 668,815 688,838 703,890 703,965/640,895 650,865 662,890 672,930/703,845 697,880 700,920 680,975 668,975
/445,900 458,920 468,945 473,985 484,1048/506,990 508,1060 513,1120 505,1170 503,1245 502,1290 472,1362 478,1430 473,1475/503,1245 470,1275 463,1290 461,1328/513,1120 540,1105 600,1030/458,1045 458,1078/478,1450 495,1460
/85,690 85,640 100,625 130,620 168,620/120,595 168,595/122,652 170,652 165,620/113,302 158,305/140,560 165,575/93,108 115,132 128,115/262,945 237,1034/227,1065 243,1078/444,816 444,822/445,848 445,853/550,1040 550,1020 560,1012`;
const roadsEast = `150,110 190,140 205,165 200,220 192,265 225,325 232,400 235,465 300,500 325,490 400,458 470,455 495,455 520,490 543,520 525,540 525,558 545,560 572,552/205,165 245,185 250,200 225,200/150,260 190,262 225,275/150,320 190,325 225,310/150,420 190,430 235,440/150,465 200,468/160,215 225,230
/330,620 390,690 400,730 440,770 490,810 600,900 605,945 640,985 690,1035 690,1110 680,1150 655,1215 645,1250 635,1290 605,1325/150,745 200,715 260,680 310,645/415,705 450,685 510,663 555,668/350,530 400,555 430,590/360,500 450,500 450,480 410,470
/720,785 770,830 830,860 900,880 950,905 975,935 1000,965 1007,983/635,840 700,855 725,885 760,895 800,915 830,940 900,950 930,965 985,975 1050,965 1090,955/660,990 740,945/690,1035 740,1040 800,1048 860,1030 960,1010 985,975/885,1065 940,1085 990,1095/900,895 940,905 1000,915 1020,930/800,955 825,940
/640,1020 655,1050 640,1080 575,1110/640,1160 680,1150 720,1170 770,1140 820,1145 870,1170/770,1140 800,1180/150,900 235,860 300,835 360,800/155,905 235,985/150,820 190,860 150,890
/990,1095 950,1130 900,1165 850,1190 800,1215 745,1245 700,1275 660,1300 600,1325 560,1340 520,1375 455,1392 390,1425 350,1425 305,1445 245,1475 165,1515 110,1495 75,1492 52,1475 80,1455 132,1443 60,1440 0,1433/590,1275 625,1320/580,1295 640,1310`;
const dotsSouth = `88,48 100,46 131,170 145,245 150,250 147,287 150,285 131,335 128,342 136,395 140,420 142,428 145,592 79,682 80,690 416,1036 458,1050 507,1047 588,1018 613,1037 640,1042 652,1038 645,1050 831,630 837,638 774,828 986,192 1230,75 1182,210 1490,345 1500,335 552,1086 558,1110 545,1108 563,1128 363,768 402,798 404,802 300,800 303,790 290,860 280,885 390,868 370,937 262,935 270,950 285,970 325,750 1215,30 345,990`;
const dotsEast = `160,150 203,150 210,158 165,190 175,205 225,335 165,427 245,462 258,465 295,475 320,470 375,448 390,445 405,450 492,457 390,505 405,495 415,490 295,648 255,610 225,625 190,650 165,665 350,688 375,685 420,700 420,735 380,715 345,745 365,775 335,785 380,770 265,842 215,868 200,945 185,962 355,1040 510,922 667,722 715,785 640,908 628,895 605,915 628,943 645,1005 690,1025 710,1035 740,1038 725,1070 690,1092 775,1102 812,997 1007,983 905,1062 912,1075 987,1100 740,1200 725,1212 662,1295 672,1293 608,1305 580,1330 457,1392 252,1475 238,1480 225,1485 350,560 365,590 370,605 345,530 165,580 160,560 160,520 180,500 170,610`;

const HawaiiMap = () => (
  <MapSvg viewBox="795 302 1558 1556" preserveAspectRatio="xMinYMin slice" role="img" aria-label="Map of Hawaii">
    <path d={island} fill="#a57058" stroke="#222" strokeWidth="2.500" strokeLinejoin="round" />
    <g fill="#000">
      {pairs(dotsSouth).map(south).map(([x, y], i) => <circle key={i} cx={x} cy={y} r="8" />)}
      {pairs(dotsEast).map(east).map(([x, y], i) => <circle key={i} cx={x} cy={y} r="8" />)}
      <path d={trace(south, "318,745 410,795 352,1000 262,945")} fill="#2a2008" />
      <path d={trace(east, "155,520 240,470 340,490 360,590 300,620 230,625 155,665")} fill="#1c1606" opacity=".85" />
    </g>
    <g fill="none" stroke="#000" strokeLinecap="round">
      <path d={trace(east, "475,803 540,765 630,722/718,795 680,845 640,885")} strokeWidth="11" />
      <path d={trace(east, "250,462 300,478 390,445/340,520 375,610")} strokeWidth="13" />
    </g>
    <g fill="#e3b334">
      <path d={trace(east, "225,485 330,478 345,520 325,560 330,605 270,605 235,618 185,605 200,560 180,530")} />
      <path d={trace(east, "470,970 520,935 590,905 555,960 485,990")} />
      <path d={trace(east, "735,950 760,905 830,855 855,870 800,920")} />
      <path d={trace(east, "745,985 815,965 805,1020 755,1020")} />
      <path d={trace(east, "610,1205 635,1198 652,1210 630,1222")} />
      <path d={trace(east, "155,990 195,968 280,1075 240,1095")} opacity=".8" />
      <path d={trace(east, "470,825 640,728 715,790 585,912")} opacity=".7" />
      <path d={trace(east, "355,470 400,450 420,480 390,500 340,510")} />
      <path d={trace(east, "725,1205 745,1205 765,1238 745,1238")} />
      <path d={trace(south, "535,1100 570,1075 600,1080 605,1100 575,1105 570,1130 550,1130")} />
      <path d={trace(south, "818,615 835,612 848,640 830,650")} />
      <path d={trace(south, "85,632 92,606 130,625 120,635")} />
      <path d={trace(south, "635,1040 655,1025 660,1045 645,1055")} />
    </g>
    <g fill="none" stroke="#e3b334" strokeWidth="2.500" strokeLinejoin="round">
      <path d={trace(south, roadsSouth)} />
      <path d={trace(east, roadsEast)} />
      <path d={grid(south, "318,738 410,795 352,1000 262,945", 15, 30)} strokeWidth="2" />
      <path d={grid(south, "300,975 352,1000 318,1130 273,1100", 7, 12)} strokeWidth="2" />
      <path d={grid(south, "270,960 290,972 262,1085 242,1075", 3, 12)} strokeWidth="2" />
      <path d={grid(east, "235,890 375,800 480,965 300,1065", 14, 8)} strokeWidth="2" />
      <path d={grid(east, "380,800 440,830 560,900 480,930", 6, 6)} strokeWidth="2" />
      <path d={grid(east, "430,845 475,815 590,910 540,930", 4, 14)} strokeWidth="2" />
      <path d={grid(east, "475,825 640,730 715,790 585,912", 24, 4)} strokeWidth="2" />
      <path d={grid(east, "155,990 195,968 280,1075 240,1095", 8, 3)} strokeWidth="2" />
      <path d={grid(east, "150,1010 165,1000 240,1095 150,1130", 3, 6)} strokeWidth="2" />
      <path d={grid(east, "390,585 490,628 460,668 395,655", 9, 4)} strokeWidth="2" />
      <path d={grid(east, "330,580 365,570 400,660 350,640", 4, 7)} strokeWidth="2" />
      <path d={grid(east, "700,1085 780,1055 790,1105 700,1105", 12, 1)} strokeWidth="2" />
      <path d={grid(east, "590,905 640,920 635,945 605,950", 3, 3)} strokeWidth="2" />
      <path d={scatter(east, 150, 480, 190, 160, 420, 11)} />
      <path d={scatter(east, 155, 120, 50, 30, 14, 5)} />
      <path d={scatter(east, 215, 280, 10, 180, 26, 23, 12)} />
      <path d={scatter(east, 165, 215, 60, 20, 12, 8)} />
      <path d={scatter(east, 345, 680, 70, 110, 80, 77, 20)} />
      <path d={scatter(east, 235, 780, 100, 20, 14, 19)} />
      <path d={scatter(east, 835, 1000, 80, 60, 16, 31, 14)} />
      <path d={scatter(east, 680, 1015, 80, 20, 20, 41, 14)} />
      <path d={scatter(east, 840, 975, 40, 25, 6, 43, 12)} />
      <path d={scatter(east, 895, 890, 50, 20, 10, 53, 14)} />
      <path d={scatter(east, 640, 1130, 30, 30, 8, 63, 14)} />
      <path d={scatter(east, 820, 1170, 30, 25, 10, 73, 12)} />
      <path d={scatter(south, 120, 590, 30, 20, 12, 91, 14)} />
      <path d={scatter(south, 75, 35, 45, 12, 12, 97, 14)} />
    </g>
    <circle cx="2111" cy="1125" r="6.500" fill="#fffb00" />
    <circle cx="2008" cy="889" r="2.500" fill="#fffb00" />
    <g fontFamily="Noto Sans, sans-serif" fontSize="7" fill="#333">
      <text x="1950" y="710">kalau</text><text x="1970" y="742">omu</text><text x="1987" y="778">ken</text><text x="1982" y="828">apaikou</text>
      <text x="1984" y="880" fill="#5a86b8">Hilo</text>
    </g>
  </MapSvg>
);

/* ---------- export dialog ---------- */

const Dialog = styled.div`
  position: fixed;
  left: 954px;
  top: 122px;
  width: 997px;
  display: flex;
  flex-direction: column;
  background: #f0f0f0;
  border: 1px solid #a8a8a8;
  border-radius: 16px;
  box-shadow: 0 56px 90px rgba(0, 0, 0, 0.24), 0 0 30px rgba(0, 0, 0, 0.1), 0 2px 4px rgba(0, 0, 0, 0.25);
  & > header { border-radius: 15px 15px 0 0; }
`;
const FormGrid = styled.div`
  display: grid;
  grid-template-columns: 121px 1fr;
  row-gap: 12px;
  align-items: center;
  padding: 38px 40px 30px;
  font: 20px/28px ${form};
`;
const Cell = styled.div`
  display: flex;
  align-items: center;
  gap: ${(p) => p.$gap || 0}px;
`;
const ClearField = styled.div`
  flex: 1;
  height: 38px;
  display: flex;
  align-items: center;
  padding: 0 13px 0 3px;
  background: #fff;
  border: 1px solid #a6a6a6;
  border-radius: 4px;
`;
const NameInput = styled.input`
  width: 277px;
  height: 26px;
  padding: 0;
  margin-right: auto;
  border: 0;
  background: #efefef;
  font: 20px/26px ${form};
`;
const Scroll = styled.div`
  display: flex;
  margin: 0 22px;
  border: 1px solid ${edge};
`;
const ScrollBody = styled.div`
  flex: 1;
  min-width: 0;
  display: flex;
  flex-direction: column;
  padding: 18px 17px 6px 18px;
`;
const SplitRow = styled.div`
  display: grid;
  grid-template-columns: ${(p) => p.$first}px 1fr;
  align-items: center;
  margin-bottom: 13px;
  font: 20px/28px ${form};
`;
const GroupHead = styled.button`
  display: flex;
  align-items: center;
  gap: 8px;
  height: 28px;
  margin: 14px 0 4px;
  padding-left: 3px;
  font: bold 21px/26px ${form};
`;
const Group = styled.fieldset`
  display: flex;
  flex-direction: column;
  min-width: 0;
  margin: 0 0 13px;
  padding: 16px 20px 22px;
  background: #ededed;
  border: 1px solid #d6d6d6;
  border-radius: 3px;
  &:last-child { margin-bottom: 0; }
`;
const TableWell = styled.div`
  height: 201px;
  display: flex;
  overflow: hidden;
  margin-bottom: 11px;
  border: 1px solid ${edge};
  background: linear-gradient(#efefef 40px, #fff 40px);
`;
const Table = styled.table`
  table-layout: fixed;
  width: 452px;
  margin-right: auto;
  align-self: flex-start;
  border-collapse: separate;
  border-spacing: 0;
  font: 22px/28px ${ui};
  th { height: 40px; padding: 1px 0 0; font-weight: normal; background: linear-gradient(#fff, #efefef); border: solid #c8c8c8; border-width: 0 1px 1px 0; border-bottom-color: #a8a8a8; }
  td { height: 60px; padding: 0 3px 0 2px; background: #fff; border: solid #c8c8c8; border-width: 0 1px 1px 0; }
`;
const NameCell = styled.label`
  display: flex;
  align-items: center;
  gap: 6px;
`;
const Buttons = styled.div`
  display: flex;
  gap: 12px;
  margin-bottom: 13px;
`;
const Stack = styled.div`
  display: flex;
  flex-direction: column;
  gap: 15px;
`;
const Footer = styled.div`
  display: flex;
  align-items: center;
  justify-content: flex-end;
  gap: 12px;
  padding: 13px 22px 20px;
`;
const FooterTick = styled(TickLabel)`margin-right: 87px;`;

const SaveDialog = () => (
  <Dialog role="dialog" aria-label="Save Vector Layer as">
    <TitleBar $h={57} $pad="0 16px 4px 13px">
      <Icon name="logo" size={30} />
      <WindowTitle as="h2">Save Vector Layer as...</WindowTitle>
      <button aria-label="Close dialog"><Icon name="close" /></button>
    </TitleBar>
    <FormGrid>
      <label htmlFor="format">Format</label>
      <Select id="format" value="GeoPackage" h={33} />
      <label htmlFor="file">File name</label>
      <Cell $gap={12}><Field id="file" /><Push $h={33}>...</Push></Cell>
      <label htmlFor="layer">Layer name</label>
      <ClearField>
        <NameInput id="layer" defaultValue="big_island_highway_polygons" />
        <button aria-label="Clear"><Icon name="clear" size={26} /></button>
      </ClearField>
      <label htmlFor="crs">CRS</label>
      <Cell $gap={6}><Select id="crs" value="Project CRS: ESRI:102007 - Hawaii_Albers_Equal_Area_Conic" h={39} /><Push aria-label="Select CRS"><Icon name="crs" /></Push></Cell>
    </FormGrid>
    <Scroll>
      <ScrollBody>
        <SplitRow $first={350}><label htmlFor="encoding">Encoding</label><Select id="encoding" value="UTF-8" h={33} disabled /></SplitRow>
        <TickLabel $off><Tick disabled />Save only selected features</TickLabel>
        <GroupHead><Caret w={12} color="#333" />Select fields to export and their export options</GroupHead>
        <Group>
          <TableWell>
            <Table>
              <colgroup><col width="209" /><col width="173" /><col width="70" /></colgroup>
              <thead><tr><th>Name</th><th>Export name</th><th>Type</th></tr></thead>
              <tbody>
                {["full_id", "osm_id", "osm_type"].map((n) => (
                  <tr key={n}><td><NameCell><Tick defaultChecked />{n}</NameCell></td><td>{n}</td><td>string</td></tr>
                ))}
              </tbody>
            </Table>
            <ScrollBar before={0} thumb={52} after={91} />
          </TableWell>
          <Buttons><Push $grow>Select All</Push><Push $grow>Deselect All</Push></Buttons>
          <TickLabel><Tick />Use aliases for exported name</TickLabel>
        </Group>
        <TickLabel><Tick defaultChecked />Persist layer metadata</TickLabel>
        <GroupHead><Caret w={12} color="#333" />Geometry</GroupHead>
        <Group>
          <SplitRow $first={428}><label htmlFor="geometry">Geometry type</label><Select id="geometry" value="Automatic" h={40} /></SplitRow>
          <Stack>
            <TickLabel><Tick />Force multi-type</TickLabel>
            <TickLabel><Tick />Include z-dimension</TickLabel>
          </Stack>
        </Group>
      </ScrollBody>
      <ScrollBar before={0} thumb={278} after={393} />
    </Scroll>
    <Footer>
      <FooterTick><Tick defaultChecked />Add saved file to map</FooterTick>
      <Push $min={80} disabled>OK</Push>
      <Push $min={80}>Cancel</Push>
      <Push $min={80}>Help</Push>
    </Footer>
  </Dialog>
);

/* ---------- status bar ---------- */

const Status = styled.footer`
  flex: none;
  height: 41px;
  display: flex;
  align-items: flex-start;
  gap: 8px;
  overflow: hidden;
  padding: 4px 8px 0 4px;
  font: 20px/40px ${form};
`;
const Hint = styled.span`flex: 1;`;
const StatusGroup = styled.label`
  height: 38px;
  display: flex;
  align-items: center;
  gap: 4px;
  margin-left: ${(p) => p.$before ?? 4}px;
`;
const StatusField = styled(Field)`
  flex: none;
  width: ${(p) => p.$w}px;
  text-align: center;
`;
const SpinBox = styled.span`
  display: flex;
  width: ${(p) => p.$w}px;
  height: 38px;
  background: #fff;
  border: 1px solid #a6a6a6;
  border-radius: 4px;
`;
const SpinInput = styled.input`
  flex: 1;
  min-width: 0;
  padding: 2px 4px 0;
  border: 0;
  background: none;
  font: 20px/26px ${form};
`;
const SpinSteps = styled(Stepper)`
  height: 36px;
  background: #f2f2f2;
  border-left: 1px solid #d0d0d0;
`;
const Spin = ({ w, value }) => (
  <SpinBox $w={w}>
    <SpinInput defaultValue={value} />
    <SpinSteps $w={27}>
      <Step aria-label="Increase"><Caret w={14} turn={180} /></Step>
      <Step aria-label="Decrease"><Caret w={14} /></Step>
    </SpinSteps>
  </SpinBox>
);
const ScaleBox = styled.span`
  display: flex;
  width: 137px;
`;

const mnemonic = (text) => {
  const [before, key, after] = text.split("_");
  return key ? <>{before}<u>{key}</u>{after}</> : text;
};
const menus = ["Pro_j_ect", "_E_dit", "_V_iew", "_L_ayer", "_S_ettings", "_P_lugins", "Vect_o_r", "_R_aster", "_D_atabase", "_W_eb", "_M_esh", "MMQGIS", "Pro_c_essing", "_H_elp"];

export default function App() {
  return (
    <Window>
      <Global />
      <TitleBar $h={45} $pad="0 3px">
        <Icon name="logo" size={30} />
        <WindowTitle>*Final Project Map — QGIS</WindowTitle>
        <FrameButtons>
          {["minimise", "restore", "close"].map((n) => <button key={n} aria-label={n}><Icon name={n} size={32} /></button>)}
        </FrameButtons>
      </TitleBar>
      <MenuBar>{menus.map((m) => <button key={m}>{mnemonic(m)}</button>)}</MenuBar>
      {rows.map((r) => <ToolBar key={r} spec={r} />)}
      <Main>
        <SideTools>
          <SideGrip><Dots $across /></SideGrip>
          {sideTools.map((t) => {
            const [name, drop] = t.split(" ");
            return <SideRow key={name}><Tool aria-label={name}><Icon name={name} /></Tool>{drop && <Drop aria-label="More"><Caret /></Drop>}</SideRow>;
          })}
        </SideTools>
        <Dock $w={702}>
          <DockHead><DockTitle>Browser</DockTitle><HeadButtons /></DockHead>
          <DockTools>
            {["addSel", "refresh", "funnel", "collapse", "info"].map((n) => <SmallTool key={n} aria-label={n}><Icon name={n} size={24} /></SmallTool>)}
          </DockTools>
          <Well $h={235}>
            <List $font={23}>
              {sources.map(([icon, name]) => <Row key={name} $pad={29} $gap={7}><Icon name={icon} />{name}</Row>)}
            </List>
            <ScrollBar before={87} thumb={53} after={39} />
          </Well>
          <Splitter><Dots $across /></Splitter>
          <DockHead><DockTitle>Layers</DockTitle><HeadButtons /></DockHead>
          <DockTools>
            {["brush", "groupAdd", "eye", "funnelDown", "epsilon"].map((n) => <SmallTool key={n} aria-label={n}><Icon name={n} size={24} /></SmallTool>)}
            <Drop aria-label="More"><Caret /></Drop>
            {["expand", "collapse", "removeLayer"].map((n) => <SmallTool key={n} aria-label={n}><Icon name={n} size={24} /></SmallTool>)}
          </DockTools>
          <Well>
            <List>
              {layers.map((l, i) => (
                <Row key={i} $pad={13} $gap={6} $current={l.current}>
                  <Fold $after={8}>{l.fold !== undefined && <Caret turn={l.fold} />}</Fold>
                  <Tick id={`layer-${i}`} defaultChecked />
                  {l.icon ? <LayerIcon><Icon name={l.icon} size={28} /></LayerIcon> : <Swatch $color={l.color} $line={l.line} />}
                  <LayerName htmlFor={`layer-${i}`} $current={l.current}>{l.name}</LayerName>
                  {l.temp && <MemoryButton aria-label="Temporary layer"><Icon name="memory" size={22} /></MemoryButton>}
                </Row>
              ))}
            </List>
          </Well>
        </Dock>
        <Canvas>
          <Message>
            <Icon name="tick" size={28} />
            <MessageText>
              <MessageLine><b>Layer Saved:</b><a href="#layer">{"  4\\layer"}</a></MessageLine>
              <MessageLine><a href="#layer">assets\big_island</a></MessageLine>
            </MessageText>
            <Stepper $w={28}>
              <Step $boxed aria-label="Previous message"><Caret w={14} turn={180} /></Step>
              <Step $boxed aria-label="Next message"><Caret w={14} /></Step>
            </Stepper>
            <Count>2 more</Count>
            <CloseGroup><button aria-label="Dismiss"><Icon name="closeRound" size={31} /></button><Caret w={12} /></CloseGroup>
          </Message>
          <HawaiiMap />
        </Canvas>
        <RightGrip><Dots /></RightGrip>
        <Dock $w={634}>
          <DockHead><DockTitle>Processing Toolbox</DockTitle><HeadButtons /></DockHead>
          <DockTools>
            {["models", "python", "clock", "document"].map((n) => <SmallTool key={n} aria-label={n}><Icon name={n} size={24} /></SmallTool>)}
            <Rule />
            <SmallTool aria-label="Edit in place"><Icon name="noteEdit" size={24} /></SmallTool>
            <Rule />
            <SmallTool aria-label="Options"><Icon name="wrench" size={24} /></SmallTool>
          </DockTools>
          <SearchRow $h={38}><Icon name="search" size={24} /><SearchInput placeholder="Search..." aria-label="Search" /></SearchRow>
          <Well>
            <List>
              {toolbox.map(([icon, name]) => (
                <Row key={name} $pad={12} $gap={7}><Fold $after={9}><Caret turn={-90} /></Fold><Icon name={icon} size={30} />{name}</Row>
              ))}
            </List>
          </Well>
        </Dock>
      </Main>
      <Status>
        <SearchRow $h={38} $w={385}><Icon name="search" size={24} /><SearchInput $form placeholder="Type to locate (Ctrl+K)" aria-label="Locate" /></SearchRow>
        <Hint>Toggles the editing state of the current layer</Hint>
        <StatusGroup>Coordinate<StatusField $w={160} defaultValue="82498, 780568" /><Icon name="mouse" size={30} /></StatusGroup>
        <StatusGroup>Scale<ScaleBox><Select value="1:796507" h={36} /></ScaleBox></StatusGroup>
        <StatusGroup><Icon name="lock" size={30} /></StatusGroup>
        <StatusGroup $before={0}>Magnifier<Spin w={131} value="100%" /></StatusGroup>
        <StatusGroup $before={0}>Rotation<Spin w={115} value="0.0 °" /></StatusGroup>
        <StatusGroup $before={0}><Tick id="render" defaultChecked /></StatusGroup>
        <StatusGroup $before={3} htmlFor="render">Render</StatusGroup>
        <StatusGroup $before={8}><Icon name="globe" size={26} />ESRI:102007</StatusGroup>
        <StatusGroup $before={28}><Icon name="bubble" size={30} /></StatusGroup>
      </Status>
      <SaveDialog />
    </Window>
  );
}
